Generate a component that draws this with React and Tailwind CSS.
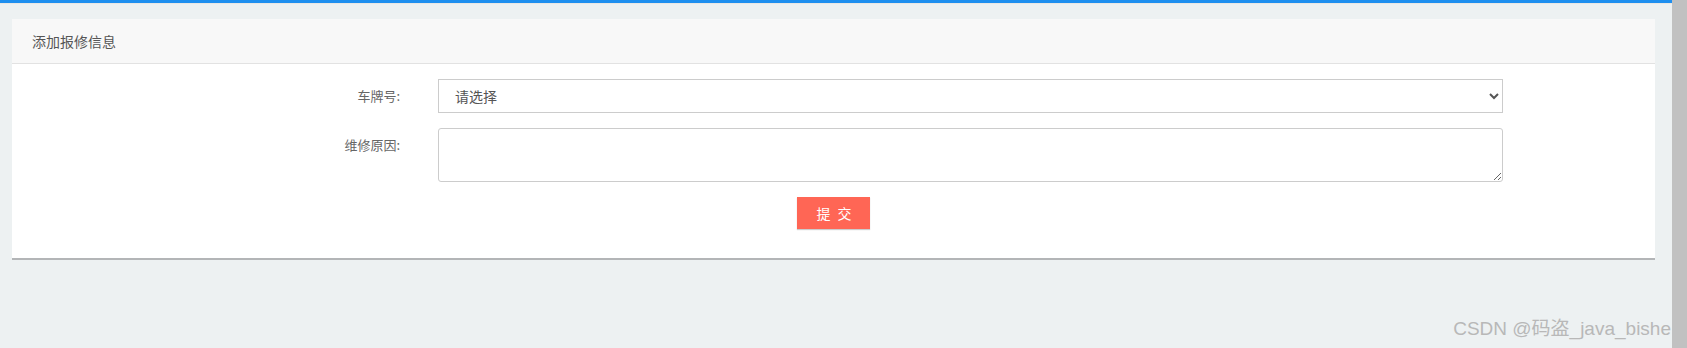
import React from "react";

export default function App() {
  const font = { fontFamily: '"Noto Sans CJK SC", "Liberation Sans", sans-serif' };
  return (
    <div className="relative flex h-[348px] w-full overflow-hidden bg-[#edf1f2]" style={font}>
      <div className="flex min-w-0 flex-1 flex-col">
        <div className="h-[3px] w-full bg-[#1e8fef]" />
        <div className="h-[1px] w-full bg-[#e9e7e4]" />
        <div className="flex flex-1 pl-[3px] pt-[15px]">
          <div className="w-[3px] shrink-0" />
          <div className="ml-[6px] mr-[17px] flex-1 self-start border-b-2 border-[#b3b5b7] bg-white">
            <div className="flex h-[45px] items-center border-b border-[#e2e2e2] bg-[#f8f8f8] pl-[20px] text-[14px] text-[#555]">
              添加报修信息
            </div>
            <div className="flex flex-col pt-[15px] pb-[29px]">
              <div className="flex items-center">
                <label className="w-[388px] shrink-0 text-right text-[13px] text-[#666]">车牌号:</label>
                <select className="ml-[38px] h-[34px] w-[1065px] border border-[#cccccc] bg-white pl-[12px] text-[14px] text-[#555] outline-none">
                  <option>请选择</option>
                </select>
              </div>
              <div className="mt-[15px] flex items-start">
                <label className="w-[388px] shrink-0 pt-[7px] text-right text-[13px] text-[#666]">维修原因:</label>
                <textarea className="ml-[38px] h-[54px] w-[1065px] rounded-[3px] border border-[#cccccc] bg-white text-[14px] outline-none" />
              </div>
              <div className="mt-[15px] flex justify-center">
                <button className="h-[32px] w-[73px] bg-[#ff6655] pl-[3px] text-[14px] tracking-[2px] text-white shadow-[0_1px_1px_rgba(0,0,0,0.2)]">
                  提 交
                </button>
              </div>
            </div>
          </div>
        </div>
      </div>
      <div className="w-[15px] shrink-0 bg-[#c1c1c1]" />
      <div className="absolute bottom-[6px] right-[16px] text-[19px] leading-[26px] text-[#b8b8b8]" style={{ fontFamily: '"Liberation Sans", "Noto Sans CJK SC", sans-serif' }}>
        CSDN @码盗_java_bishe
      </div>
    </div>
  );
}
